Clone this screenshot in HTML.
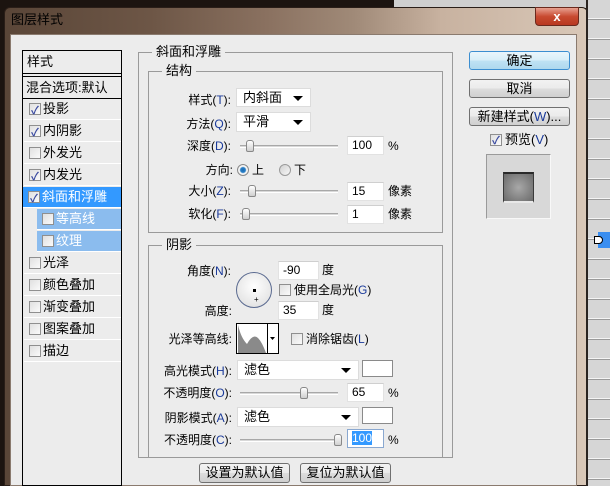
<!DOCTYPE html>
<html><head><meta charset="utf-8"><style>
*{margin:0;padding:0;box-sizing:border-box}
body{width:610px;height:486px;overflow:hidden;background:#1c1410;position:relative;font-family:"Liberation Sans","Noto Sans CJK SC","WenQuanYi Zen Hei",sans-serif;font-size:12px;color:#000}
.a{position:absolute}
.lab{position:absolute;text-align:right;white-space:nowrap;font-size:12px;line-height:14px}
.lab u{text-decoration:none;color:#1a3a9a}
.inp{position:absolute;background:#fff;border:1px solid #e2e2e2;border-top-color:#cfcfcf;font-size:12px;line-height:16px;padding-left:4px}
.dd{position:absolute;background:#fff;border:1px solid #dcdcdc;font-size:13px;line-height:18px;padding-left:6px}
.dd:after{content:"";position:absolute;right:7px;top:7px;border-left:5px solid transparent;border-right:5px solid transparent;border-top:5px solid #000}
.trk{position:absolute;height:3px;border-top:1px solid #a8a8a8;border-bottom:1px solid #fff;background:#d8d8d8}
.th{position:absolute;width:8px;height:12px;background:linear-gradient(#fff,#d0d0d0);border:1px solid #888;border-radius:3px 3px 2px 2px}
.fs{position:absolute;border:1px solid #9a9a9a}
.leg{position:absolute;background:#ececec;padding:0 4px;font-size:13px;line-height:14px}
.cb{position:absolute;width:12px;height:12px;border:1px solid #8f8f8f;background:linear-gradient(135deg,#e0e0e0,#fafafa)}
.cb.on:after{content:"✓";position:absolute;left:1px;top:-3px;font-size:11px;color:#3a4aa0;font-weight:bold}
.it{position:absolute;left:1px;width:97px;height:21px;border-bottom:1px solid #fff;font-size:13px;line-height:20px}
.it .cb{left:5px;top:4px}
.it span{position:absolute;left:19px}
.btn{position:absolute;border:1px solid #707070;border-radius:3px;background:linear-gradient(#f2f2f2 0,#ebebeb 50%,#dddddd 51%,#cfcfcf);text-align:center;font-size:13px;line-height:17px}
</style></head><body>
<div class="a" style="left:394px;top:0;width:194px;height:8px;background:#cfcfcf"></div>
<!-- window frame -->
<div class="a" style="left:4px;top:7px;width:584px;height:479px;border-radius:6px 6px 0 0;background:linear-gradient(90deg,#5a4638 0%,#6d5646 25%,#8a7160 45%,#a08a78 60%,#c8b2a0 75%,#d9c8b8 100%);border:1px solid #2a1e18"></div>
<div class="a" style="left:11px;top:12px;font-size:13px;line-height:15px;color:#000">图层样式</div>
<div class="a" style="left:535px;top:7px;width:44px;height:19px;border-radius:0 0 4px 4px;background:linear-gradient(#e8a090,#c84a30 50%,#b83820);border:1px solid #6a2a1e;color:#fff;font-weight:bold;text-align:center;font-size:13px;line-height:17px">x</div>
<div class="a" style="left:10px;top:34px;width:567px;height:452px;background:#ececec;border:1px solid #8a7a6e"></div>
<!-- right panel -->
<div class="a" style="left:586px;top:0;width:24px;height:486px;background:#d6d6d6;border-left:2px solid #2a2420"></div>
<div class="a" style="left:588px;top:0;width:22px;height:486px;background:repeating-linear-gradient(#d6d6d6 0,#d6d6d6 18px,#f4f4f4 18px,#f4f4f4 19px,#9a9a9a 19px,#9a9a9a 20px)"></div>
<div class="a" style="left:598px;top:232px;width:12px;height:16px;background:#3a8ef0"></div>
<div class="a" style="left:594px;top:236px;width:9px;height:8px;background:#fff;border:1px solid #000;border-radius:0 4px 4px 0"></div>

<!-- left list -->
<div class="a" style="left:22px;top:50px;width:100px;height:436px;border:1px solid #000;background:#ececec">
 <div class="a" style="left:0;top:0;width:98px;height:23px;border-bottom:1px solid #000;font-size:13px;line-height:22px;padding-left:4px">样式</div>
 <div class="a" style="left:0;top:25px;width:98px;height:23px;border-top:1px solid #000;border-bottom:1px solid #000;font-size:13px;line-height:22px;padding-left:3px">混合选项:默认</div>
 <div class="it" style="top:48px"><div class="cb on"></div><span>投影</span></div>
 <div class="it" style="top:70px"><div class="cb on"></div><span>内阴影</span></div>
 <div class="it" style="top:92px"><div class="cb"></div><span>外发光</span></div>
 <div class="it" style="top:114px"><div class="cb on"></div><span>内发光</span></div>
 <div class="it" style="top:136px;background:#3399ff;color:#fff;left:0;width:98px"><div class="cb on"></div><span>斜面和浮雕</span></div>
 <div class="it" style="top:158px;left:14px;width:84px;background:#8bbcee;color:#fff"><div class="cb"></div><span>等高线</span></div>
 <div class="it" style="top:180px;left:14px;width:84px;background:#8bbcee;color:#fff"><div class="cb"></div><span>纹理</span></div>
 <div class="it" style="top:202px"><div class="cb"></div><span>光泽</span></div>
 <div class="it" style="top:224px"><div class="cb"></div><span>颜色叠加</span></div>
 <div class="it" style="top:246px"><div class="cb"></div><span>渐变叠加</span></div>
 <div class="it" style="top:268px"><div class="cb"></div><span>图案叠加</span></div>
 <div class="it" style="top:290px"><div class="cb"></div><span>描边</span></div>
</div>

<!-- main fieldsets -->
<div class="fs" style="left:138px;top:52px;width:315px;height:406px"></div>
<div class="leg" style="left:152px;top:45px">斜面和浮雕</div>
<div class="fs" style="left:148px;top:71px;width:295px;height:162px"></div>
<div class="leg" style="left:162px;top:64px">结构</div>

<div class="lab" style="left:150px;width:81px;top:93px">样式(<u>T</u>):</div>
<div class="dd" style="left:236px;top:88px;width:75px;height:19px">内斜面</div>
<div class="lab" style="left:150px;width:81px;top:117px">方法(<u>Q</u>):</div>
<div class="dd" style="left:236px;top:112px;width:75px;height:20px">平滑</div>
<div class="lab" style="left:150px;width:81px;top:139px">深度(<u>D</u>):</div>
<div class="trk" style="left:240px;top:145px;width:98px"></div><div class="th" style="left:246px;top:140px"></div>
<div class="inp" style="left:347px;top:136px;width:37px;height:19px">100</div><div class="lab" style="left:388px;top:139px">%</div>
<div class="lab" style="left:150px;width:83px;top:163px">方向:</div>
<div class="a" style="left:237px;top:164px;width:12px;height:12px;border-radius:50%;border:1px solid #8a8a8a;background:radial-gradient(circle,#1a6ab0 0,#2a80c8 2.5px,#f4f4f4 3.5px)"></div>
<div class="lab" style="left:252px;top:163px">上</div>
<div class="a" style="left:279px;top:164px;width:12px;height:12px;border-radius:50%;border:1px solid #9a9a9a;background:linear-gradient(135deg,#d0d0d0,#f8f8f8)"></div>
<div class="lab" style="left:294px;top:163px">下</div>
<div class="lab" style="left:150px;width:81px;top:184px">大小(<u>Z</u>):</div>
<div class="trk" style="left:240px;top:190px;width:98px"></div><div class="th" style="left:248px;top:185px"></div>
<div class="inp" style="left:347px;top:182px;width:37px;height:19px">15</div><div class="lab" style="left:388px;top:184px">像素</div>
<div class="lab" style="left:150px;width:81px;top:207px">软化(<u>F</u>):</div>
<div class="trk" style="left:240px;top:213px;width:98px"></div><div class="th" style="left:242px;top:208px"></div>
<div class="inp" style="left:347px;top:205px;width:37px;height:19px">1</div><div class="lab" style="left:388px;top:207px">像素</div>

<div class="fs" style="left:148px;top:245px;width:295px;height:213px"></div>
<div class="leg" style="left:162px;top:238px">阴影</div>
<div class="lab" style="left:150px;width:81px;top:264px">角度(<u>N</u>):</div>
<div class="inp" style="left:278px;top:261px;width:41px;height:19px">-90</div><div class="lab" style="left:322px;top:263px">度</div>
<div class="a" style="left:236px;top:272px;width:36px;height:36px;border-radius:50%;border:1px solid #5a6a90;background:radial-gradient(circle at 50% 40%,#fff,#e6e6e6 70%,#cfcfcf)"></div>
<div class="a" style="left:253px;top:289px;width:3px;height:3px;background:#000"></div>
<div class="a" style="left:254px;top:296px;font-size:8px;line-height:8px">+</div>
<div class="cb" style="left:279px;top:284px"></div>
<div class="lab" style="left:294px;top:283px">使用全局光(<u>G</u>)</div>
<div class="lab" style="left:150px;width:82px;top:304px">高度:</div>
<div class="inp" style="left:278px;top:301px;width:41px;height:19px">35</div><div class="lab" style="left:322px;top:303px">度</div>
<div class="lab" style="left:150px;width:82px;top:332px">光泽等高线:</div>
<div class="a" style="left:236px;top:323px;width:43px;height:31px;border:1px solid #000;background:#fff">
 <svg width="41" height="29" style="position:absolute;left:0;top:0"><path d="M1 29 L1 1 Q4 14 10 20 Q16 9 21 14 Q25 18 29 29 Z" fill="#8a8a8a"/><line x1="30.5" y1="0" x2="30.5" y2="29" stroke="#000"/><path d="M33 13 L38 13 L35.5 16Z" fill="#000"/></svg>
</div>
<div class="cb" style="left:291px;top:333px"></div>
<div class="lab" style="left:306px;top:332px">消除锯齿(<u>L</u>)</div>
<div class="lab" style="left:150px;width:82px;top:364px">高光模式(<u>H</u>):</div>
<div class="dd" style="left:237px;top:360px;width:122px;height:20px">滤色</div>
<div class="a" style="left:362px;top:360px;width:31px;height:17px;border:1px solid #8a8a8a;background:#fff"></div>
<div class="lab" style="left:150px;width:82px;top:386px">不透明度(<u>O</u>):</div>
<div class="trk" style="left:240px;top:392px;width:98px"></div><div class="th" style="left:300px;top:387px"></div>
<div class="inp" style="left:347px;top:383px;width:37px;height:19px">65</div><div class="lab" style="left:388px;top:386px">%</div>
<div class="lab" style="left:150px;width:82px;top:411px">阴影模式(<u>A</u>):</div>
<div class="dd" style="left:237px;top:407px;width:122px;height:20px">滤色</div>
<div class="a" style="left:362px;top:407px;width:31px;height:17px;border:1px solid #8a8a8a;background:#fff"></div>
<div class="lab" style="left:150px;width:82px;top:433px">不透明度(<u>C</u>):</div>
<div class="trk" style="left:240px;top:439px;width:98px"></div><div class="th" style="left:334px;top:434px"></div>
<div class="inp" style="left:347px;top:429px;width:37px;height:19px;border-color:#8aa8d0"><span style="background:#3399ff;color:#fff">100</span></div><div class="lab" style="left:388px;top:433px">%</div>

<div class="btn" style="left:199px;top:463px;width:91px;height:20px">设置为默认值</div>
<div class="btn" style="left:300px;top:463px;width:91px;height:20px">复位为默认值</div>

<!-- right buttons -->
<div class="btn" style="left:469px;top:51px;width:101px;height:19px;border-color:#3c8ed0;background:linear-gradient(#eaf6fc,#d8eef8 50%,#bfe2f4 51%,#aed8ee)">确定</div>
<div class="btn" style="left:469px;top:79px;width:101px;height:19px">取消</div>
<div class="btn" style="left:469px;top:107px;width:101px;height:19px">新建样式(<span style="color:#1a3a9a">W</span>)...</div>
<div class="cb on" style="left:490px;top:134px"></div>
<div class="lab" style="left:505px;top:133px;font-size:13px">预览(<u>V</u>)</div>
<div class="a" style="left:486px;top:154px;width:65px;height:65px;background:#d8d8d8;border-top:1px solid #9a9a9a;border-left:1px solid #9a9a9a;border-right:1px solid #f8f8f8;border-bottom:1px solid #f8f8f8"></div>
<div class="a" style="left:503px;top:172px;width:31px;height:31px;background:radial-gradient(circle,#a8a8a8,#6a6a6a);border-top:2px solid #2a2a2a;border-bottom:2px solid #e8e8e8;border-left:1px solid #3a3a3a;border-right:1px solid #3a3a3a"></div>
</body></html>
